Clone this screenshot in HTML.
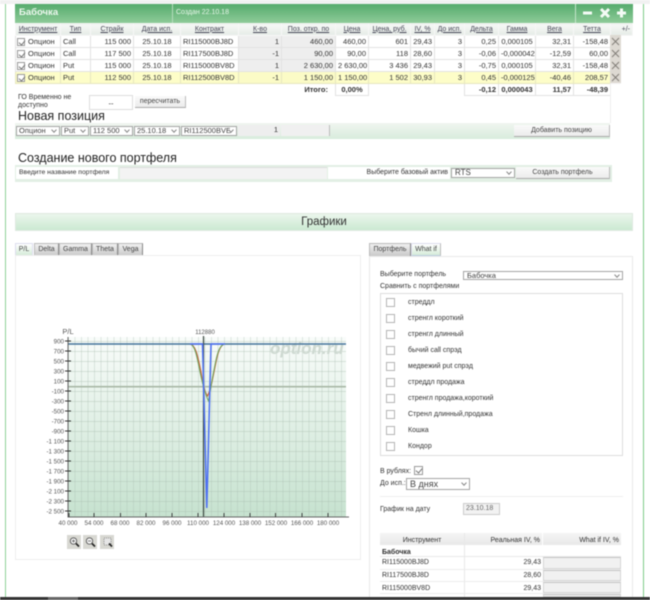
<!DOCTYPE html>
<html lang="ru">
<head>
<meta charset="utf-8">
<title>Бабочка</title>
<style>
html,body{margin:0;padding:0;background:#fff}
body{width:650px;height:600px;overflow:hidden;position:relative;font-family:"Liberation Sans",sans-serif;font-size:7.5px;color:#333}
#w{position:absolute;left:0;top:0;width:650px;height:600px;overflow:hidden;filter:blur(.42px)}
.a{position:absolute;box-sizing:border-box}
.t{position:absolute;white-space:nowrap;line-height:10px}
.sel{position:absolute;box-sizing:border-box;background:#fff;border:1px solid #a4a4a4;line-height:8px;padding-left:2px;white-space:nowrap;overflow:hidden;color:#444}
.sel:after{content:"";position:absolute;right:3px;top:50%;width:3px;height:3px;margin-top:-3px;border-right:1px solid #888;border-bottom:1px solid #888;transform:rotate(45deg);background:#fff}
.btn{position:absolute;box-sizing:border-box;background:linear-gradient(#fafafa,#ececec);border-right:1px solid #bbb;border-bottom:1px solid #aaa;text-align:center;white-space:nowrap;color:#444}
table{border-collapse:collapse;table-layout:fixed;position:absolute;font-size:7.5px}
#p td,#p th{height:12px;padding:0 2px;box-sizing:border-box;white-space:nowrap;overflow:hidden;border:1px solid #e2e2e2;line-height:10px;text-align:right;font-weight:normal}
#p th{text-align:center;background:linear-gradient(#f6f8f6,#e6ece7);text-decoration:underline;color:#445;border-color:#f7f7f7;font-size:7px}
#p .l{text-align:left}
#p .c{text-align:center}
#p .g{background:#eee}
#p .y td{background:#fdfdc8;border-color:#e6e6c0}
#p .y .g{background:#fbfbc6}
#p .tot td{font-weight:bold;border:0;font-size:7.5px}
#p .tot .b{border:1px solid #e2e2e2;border-top:0}
.cb{display:inline-block;width:8px;height:8px;border:1px solid #9a9a9a;box-sizing:border-box;vertical-align:-2px;margin-right:3px;position:relative;background:#fff}
.cb.on:after{content:"";position:absolute;left:1.5px;top:0;width:3px;height:5px;border-right:1px solid #777;border-bottom:1px solid #777;transform:rotate(40deg)}
.x{position:absolute;left:610px;width:11px;height:12px;background:#ddd9d2;border-bottom:1px solid #f4f4f4}
.x svg{display:block}
.tab{position:absolute;top:243px;height:13px;box-sizing:border-box;background:linear-gradient(#f0f0f0,#c9c9c9);border:1px solid #bbb;border-bottom:0;border-right:1px solid #888;text-align:center;line-height:12px;font-size:7px;color:#444}
.tab.on{background:linear-gradient(#fff,#d6ecd9);border-color:#dde;border-bottom:1px solid #bcd;}
.box{position:absolute;box-sizing:border-box;left:386px;width:9px;height:9px;border:1px solid #b4b4b4;background:#fff}
.inp{position:absolute;box-sizing:border-box;background:#f1f1f1;border:1px solid #d5d5d5;border-top-color:#c4c4c4}
</style>
</head>
<body>
<div id="w">
<!-- page frame -->
<div class="a" style="left:0;top:0;width:650px;height:4px;background:#f1f1f1"></div>
<div class="a" style="left:5px;top:4px;width:1px;height:593px;background:#8fd197"></div>
<div class="a" style="left:643px;top:4px;width:1px;height:593px;background:#7fcc8a"></div>

<!-- title -->
<div class="a" style="left:15px;top:4px;width:618px;height:19px;background:linear-gradient(#55ab6c,#8ecb99)"></div>
<div class="a" style="left:172px;top:4px;width:1px;height:19px;background:#b5dcbd"></div>
<div class="a" style="left:575px;top:4px;width:1px;height:19px;background:#c5e5cb"></div>
<div class="t" style="left:19px;top:8px;font-size:9.5px;font-weight:bold;color:#eef8ef">Бабочка</div>
<div class="t" style="left:176px;top:8px;font-size:7px;color:#e8f6ea">Создан 22.10.18</div>
<svg class="a" style="left:575px;top:4px" width="58" height="19"><g stroke="#f4fbf5" stroke-width="3" fill="none"><path d="M8 9H17"/><path d="M26 5L34 13M34 5L26 13"/><path d="M42 9H51M46.500 4.500V13.500"/></g></svg>

<!-- portfolio table -->
<table id="p" style="left:15px;top:23px;width:617px">
<colgroup><col style="width:45px"><col style="width:30px"><col style="width:43px"><col style="width:47px"><col style="width:58px"><col style="width:43px"><col style="width:54px"><col style="width:33px"><col style="width:42px"><col style="width:24px"><col style="width:30px"><col style="width:34px"><col style="width:37px"><col style="width:38px"><col style="width:37px"><col style="width:22px"></colgroup>
<tr><th>Инструмент</th><th>Тип</th><th>Страйк</th><th>Дата исп.</th><th>Контракт</th><th>К-во</th><th>Поз. откр. по</th><th>Цена</th><th>Цена, руб.</th><th>IV, %</th><th>До исп.</th><th>Дельта</th><th>Гамма</th><th>Вега</th><th>Тетта</th><th style="text-decoration:none;text-align:right">+/-</th></tr>
<tr><td class="l" style="padding-left:1px"><span class="cb on"></span>Опцион</td><td class="l">Call</td><td>115 000</td><td class="c">25.10.18</td><td class="l">RI115000BJ8D</td><td class="g">1</td><td class="g">460,00</td><td>460,00</td><td>601</td><td>29,43</td><td>3</td><td>0,25</td><td class="c">0,000105</td><td>32,31</td><td>-158,48</td><td style="border:0"></td></tr>
<tr><td class="l" style="padding-left:1px"><span class="cb on"></span>Опцион</td><td class="l">Call</td><td>117 500</td><td class="c">25.10.18</td><td class="l">RI117500BJ8D</td><td class="g">-1</td><td class="g">90,00</td><td>90,00</td><td>118</td><td>28,60</td><td>3</td><td>-0,06</td><td class="c">-0,000042</td><td>-12,59</td><td>60,00</td><td style="border:0"></td></tr>
<tr><td class="l" style="padding-left:1px"><span class="cb on"></span>Опцион</td><td class="l">Put</td><td>115 000</td><td class="c">25.10.18</td><td class="l">RI115000BV8D</td><td class="g">1</td><td class="g">2 630,00</td><td>2 630,00</td><td>3 436</td><td>29,43</td><td>3</td><td>-0,75</td><td class="c">0,000105</td><td>32,31</td><td>-158,48</td><td style="border:0"></td></tr>
<tr class="y"><td class="l" style="padding-left:1px"><span class="cb on"></span>Опцион</td><td class="l">Put</td><td>112 500</td><td class="c">25.10.18</td><td class="l">RI112500BV8D</td><td class="g">-1</td><td class="g">1 150,00</td><td>1 150,00</td><td>1 502</td><td>30,93</td><td>3</td><td>0,45</td><td class="c">-0,000125</td><td>-40,46</td><td>208,57</td><td style="border:0;background:#fff"></td></tr>
<tr class="tot"><td colspan="7" style="padding-right:7px">Итого:</td><td class="b c">0,00%</td><td colspan="3"></td><td class="b">-0,12</td><td class="b c">0,000043</td><td class="b">11,57</td><td class="b">-48,39</td><td></td></tr>
</table>
<div class="x" style="top:35px"><svg width="11" height="12"><path d="M2 3L9 10M9 3L2 10" stroke="#807c76" stroke-width=".9"/></svg></div>
<div class="x" style="top:47px"><svg width="11" height="12"><path d="M2 3L9 10M9 3L2 10" stroke="#807c76" stroke-width=".9"/></svg></div>
<div class="x" style="top:59px"><svg width="11" height="12"><path d="M2 3L9 10M9 3L2 10" stroke="#807c76" stroke-width=".9"/></svg></div>
<div class="x" style="top:71px"><svg width="11" height="12"><path d="M2 3L9 10M9 3L2 10" stroke="#807c76" stroke-width=".9"/></svg></div>
<div class="a" style="left:610px;top:83px;width:1px;height:40px;background:#eee"></div>

<!-- margin -->
<div class="t" style="left:18px;top:94px;width:66px;white-space:normal;line-height:8px;font-size:7px">ГО Временно не доступно</div>
<div class="a" style="left:89px;top:95px;width:44px;height:15px;border:1px solid #ddd;text-align:center;line-height:15px">--</div>
<div class="btn" style="left:135px;top:96px;width:51px;height:12px;line-height:11px;font-size:7px">пересчитать</div>
<div class="t" style="left:18px;top:110px;font-size:12.5px;line-height:13px;color:#222">Новая позиция</div>

<!-- new position -->
<div class="a" style="left:15px;top:123px;width:595px;height:16px;background:linear-gradient(#f0f5f0,#d8ecdc)"></div>
<div class="sel" style="left:16px;top:126px;width:44px;height:10px">Опцион</div>
<div class="sel" style="left:61px;top:126px;width:28px;height:10px">Put</div>
<div class="sel" style="left:90px;top:126px;width:43px;height:10px">112 500</div>
<div class="sel" style="left:134px;top:126px;width:46px;height:10px">25.10.18</div>
<div class="sel" style="left:181px;top:126px;width:56px;height:10px">RI112500BVE</div>
<div class="a" style="left:238px;top:125px;width:42px;height:11px;text-align:right;padding-right:2px;line-height:10px;background:#eee">1</div>
<div class="a" style="left:281px;top:125px;width:49px;height:11px;background:#f0f0f0;border-right:1px solid #bbb"></div>
<div class="btn" style="left:514px;top:125px;width:96px;height:12px;line-height:11px;font-size:7px">Добавить позицию</div>

<!-- new portfolio -->
<div class="t" style="left:18px;top:152px;font-size:12.5px;line-height:13px;color:#222">Создание нового портфеля</div>
<div class="a" style="left:15px;top:165px;width:597px;height:17px;background:#e2efe4"></div>
<div class="a" style="left:16px;top:167px;width:102px;height:12px;background:#fff;font-size:6.8px;line-height:12px;padding-left:3px;white-space:nowrap">Введите название портфеля</div>
<div class="a" style="left:120px;top:167px;width:207px;height:12px;background:#f3f3f3;border-top:1px solid #ddd"></div>
<div class="a" style="left:328px;top:167px;width:122px;height:12px;background:#fff;text-align:right;padding-right:2px;line-height:12px;font-size:7px;white-space:nowrap">Выберите базовый актив</div>
<div class="sel" style="left:451px;top:168px;width:64px;height:10px;line-height:8px;font-size:8px;padding-left:3px">RTS</div>
<div class="btn" style="left:516px;top:167px;width:94px;height:12px;line-height:12px;font-size:7px">Создать портфель</div>

<!-- charts bar -->
<div class="a" style="left:15px;top:213px;width:618px;height:18px;background:linear-gradient(#ebf6ec,#cbe9d2);border:1px solid #dfe9e0;text-align:center;font-size:11.5px;line-height:17px;color:#333">Графики</div>

<!-- left tabs -->
<div class="tab on" style="left:15px;width:18px">P/L</div>
<div class="tab" style="left:34px;width:25px">Delta</div>
<div class="tab" style="left:59px;width:33px">Gamma</div>
<div class="tab" style="left:92px;width:26px">Theta</div>
<div class="tab" style="left:118px;width:25px">Vega</div>
<div class="a" style="left:15px;top:255px;width:346px;height:305px;border:1px solid #eee;background:#fff"></div>

<!-- chart -->
<svg class="a" style="left:15px;top:325px" width="345" height="210" viewBox="15 325 345 210" font-family="Liberation Sans, sans-serif" font-size="6.200" fill="#555">
<defs>
<linearGradient id="bg" x1="0" y1="0" x2="0" y2="1"><stop offset="0" stop-color="#f9fcfa"/><stop offset="1" stop-color="#c6e2cf"/></linearGradient>
<pattern id="gv" x="68" y="0" width="6.5" height="600" patternUnits="userSpaceOnUse"><rect width="1" height="600" fill="#a9bdb0" opacity=".35"/></pattern>
<pattern id="gh" x="0" y="341" width="400" height="10" patternUnits="userSpaceOnUse"><rect width="400" height="1" fill="#a9bdb0" opacity=".4"/></pattern>
</defs>
<rect x="68" y="337" width="278" height="180" fill="url(#bg)"/>
<rect x="68" y="337" width="278" height="180" fill="url(#gv)"/>
<rect x="68" y="337" width="278" height="180" fill="url(#gh)"/>
<text x="270" y="354" font-size="17" font-weight="bold" font-style="italic" fill="#ced9d1">option.ru</text>
<path d="M68 386.700H346" stroke="#a8b8a6" stroke-width="1.600"/>
<path d="M68 344H346" stroke="#44739a" stroke-width="1.400"/>
<path d="M203.500 336V517" stroke="#3c4a42" stroke-width="1.200"/>
<path d="M190 344C196 345 198 358 201 372C203 386 205 393 207.500 396C211 390 213 376 216 362C218 352 220 346 224 344" fill="none" stroke="#c8623f" stroke-width="1.200"/>
<path d="M190 344C195 345 197 357 200 372C203 386 206 396 208.500 401C210 392 213 374 216 360C218 351 220 346 224 344" fill="none" stroke="#6fa55f" stroke-width="1"/>
<path d="M190 344H202.500L206.800 508L211 344H225" fill="none" stroke="#4d70f2" stroke-width="1.500"/>
<path d="M68 337V517H349" fill="none" stroke="#666" stroke-width="1"/>
<path d="M65 341h6M65 351h6M65 361h6M65 371h6M65 381h6M65 391h6M65 401h6M65 411h6M65 421h6M65 431h6M65 441h6M65 451h6M65 461h6M65 471h6M65 481h6M65 491h6M65 501h6M65 511h6" stroke="#333" stroke-width=".9"/>
<path d="M69 513v4M94 513v4M120.500 513v4M146 513v4M172 513v4M198 513v4M224 513v4M250 513v4M275.500 513v4M302 513v4M328 513v4" stroke="#333" stroke-width=".9"/>
<g text-anchor="end">
<text x="64" y="343.300">900</text><text x="64" y="353.300">700</text><text x="64" y="363.300">500</text><text x="64" y="373.300">300</text><text x="64" y="383.300">100</text><text x="64" y="393.300">-100</text><text x="64" y="403.300">-300</text><text x="64" y="413.300">-500</text><text x="64" y="423.300">-700</text><text x="64" y="433.300">-900</text><text x="64" y="443.300">-1 100</text><text x="64" y="453.300">-1 300</text><text x="64" y="463.300">-1 500</text><text x="64" y="473.300">-1 700</text><text x="64" y="483.300">-1 900</text><text x="64" y="493.300">-2 100</text><text x="64" y="503.300">-2 300</text><text x="64" y="513.300">-2 500</text>
</g>
<g text-anchor="middle">
<text x="68" y="525">40 000</text><text x="94" y="525">54 000</text><text x="120" y="525">68 000</text><text x="146" y="525">82 000</text><text x="172" y="525">96 000</text><text x="198" y="525">110 000</text><text x="224" y="525">124 000</text><text x="250" y="525">138 000</text><text x="276" y="525">152 000</text><text x="302" y="525">166 000</text><text x="328" y="525">180 000</text>
<text x="68" y="334" font-size="7.500">P/L</text><text x="205" y="334" font-size="6">112880</text>
</g>
</svg>

<!-- zoom buttons -->
<svg class="a" style="left:66px;top:534px" width="50" height="16">
<g>
<rect x="1" y="1" width="14" height="14" fill="#d8d8d2"/><rect x="17" y="1" width="14" height="14" fill="#d8d8d2"/><rect x="34" y="1" width="14" height="14" fill="#d8d8d2"/>
<g fill="#f4f4f4" stroke="#555" stroke-width=".9"><circle cx="7.500" cy="7" r="3.200"/><circle cx="23.500" cy="7" r="3.200"/></g>
<rect x="38" y="4" width="7" height="7" fill="#e6e6e6" stroke="#777" stroke-width=".8" stroke-dasharray="1 1"/>
<path d="M10 9.500L13 12.500M26 9.500L29 12.500M43 9.500L46 12.500" stroke="#222" stroke-width="1.600"/>
<path d="M6 7h3M7.500 5.500v3M22 7h3" stroke="#555" stroke-width=".7"/>
</g></svg>

<!-- right panel -->
<div class="tab" style="left:369px;width:42px">Портфель</div>
<div class="tab on" style="left:411px;width:30px;color:#444;border-right:1px solid #bbb">What if</div>
<div class="a" style="left:369px;top:256px;width:264px;height:341px;border:1px solid #eaeaea;border-bottom:0;background:#fff"></div>
<div class="t" style="left:380px;top:270px;font-size:7px">Выберите портфель</div>
<div class="sel" style="left:463px;top:271px;width:160px;height:9px;padding-left:3px;line-height:7px">Бабочка</div>
<div class="t" style="left:380px;top:282px;font-size:7px">Сравнить с портфелями</div>
<div class="a" style="left:380px;top:293px;width:243px;height:163px;border:1px solid #ddd"></div>
<div class="box" style="top:298px"></div><div class="t" style="left:408px;top:298px;font-size:7px">стреддл</div>
<div class="box" style="top:314px"></div><div class="t" style="left:408px;top:314px;font-size:7px">стренгл короткий</div>
<div class="box" style="top:330px"></div><div class="t" style="left:408px;top:330px;font-size:7px">стренгл длинный</div>
<div class="box" style="top:346px"></div><div class="t" style="left:408px;top:346px;font-size:7px">бычий call спрэд</div>
<div class="box" style="top:362px"></div><div class="t" style="left:408px;top:362px;font-size:7px">медвежий put спрэд</div>
<div class="box" style="top:378px"></div><div class="t" style="left:408px;top:378px;font-size:7px">стреддл продажа</div>
<div class="box" style="top:394px"></div><div class="t" style="left:408px;top:394px;font-size:7px">стренгл продажа,короткий</div>
<div class="box" style="top:410px"></div><div class="t" style="left:408px;top:410px;font-size:7px">Стренл длинный,продажа</div>
<div class="box" style="top:426px"></div><div class="t" style="left:408px;top:426px;font-size:7px">Кошка</div>
<div class="box" style="top:442px"></div><div class="t" style="left:408px;top:442px;font-size:7px">Кондор</div>
<div class="t" style="left:380px;top:467px;font-size:7px">В рублях:</div>
<span class="cb on" style="position:absolute;left:414px;top:466px;width:9px;height:9px;margin:0"></span>
<div class="t" style="left:380px;top:479px;font-size:7px">До исп.:</div>
<div class="sel" style="left:406px;top:478px;width:64px;height:12px;font-size:9px;line-height:10px;padding-left:3px">В днях</div>
<div class="a" style="left:380px;top:496px;width:243px;height:1px;background:#eee"></div>
<div class="t" style="left:380px;top:505px;font-size:7px">График на дату</div>
<div class="a" style="left:463px;top:503px;width:37px;height:12px;background:#f2f2f2;border:1px solid #ccc;font-size:7px;line-height:10px;padding-left:2px;color:#666">23.10.18</div>
<div class="a" style="left:380px;top:533px;width:241px;height:12px;background:linear-gradient(#f5f5f5,#e8e8e8)"></div>
<div class="a" style="left:464px;top:533px;width:1px;height:64px;background:#e8e8e8"></div>
<div class="a" style="left:542px;top:533px;width:1px;height:12px;background:#fff"></div>
<div class="t" style="left:380px;top:536px;width:84px;text-align:center;font-size:7px">Инструмент</div>
<div class="t" style="left:465px;top:536px;width:75px;text-align:right;font-size:7px">Реальная IV, %</div>
<div class="t" style="left:543px;top:536px;width:76px;text-align:right;font-size:7px">What if IV, %</div>
<div class="t" style="left:382px;top:548px;font-weight:bold;font-size:7px">Бабочка</div>
<div class="a" style="left:380px;top:556px;width:241px;height:1px;background:#e8e8e8"></div>
<div class="a" style="left:380px;top:569px;width:241px;height:1px;background:#ececec"></div>
<div class="a" style="left:380px;top:581px;width:241px;height:1px;background:#ececec"></div>
<div class="a" style="left:380px;top:593px;width:241px;height:1px;background:#ececec"></div>
<div class="t" style="left:382px;top:558px;font-size:7px">RI115000BJ8D</div><div class="t" style="left:465px;top:558px;width:76px;text-align:right;font-size:7px">29,43</div>
<div class="t" style="left:382px;top:571px;font-size:7px">RI117500BJ8D</div><div class="t" style="left:465px;top:571px;width:76px;text-align:right;font-size:7px">28,60</div>
<div class="t" style="left:382px;top:584px;font-size:7px">RI115000BV8D</div><div class="t" style="left:465px;top:584px;width:76px;text-align:right;font-size:7px">29,43</div>
<div class="inp" style="left:543px;top:557px;width:78px;height:12px"></div>
<div class="inp" style="left:543px;top:570px;width:78px;height:11px"></div>
<div class="inp" style="left:543px;top:582px;width:78px;height:11px"></div>
<div class="inp" style="left:543px;top:594px;width:78px;height:3px"></div>

<!-- bottom bar -->
<div class="a" style="left:0;top:597px;width:650px;height:3px;background:#333"></div>
<div class="a" style="left:48px;top:597px;width:30px;height:3px;background:#666"></div>
</div>
</body>
</html>
